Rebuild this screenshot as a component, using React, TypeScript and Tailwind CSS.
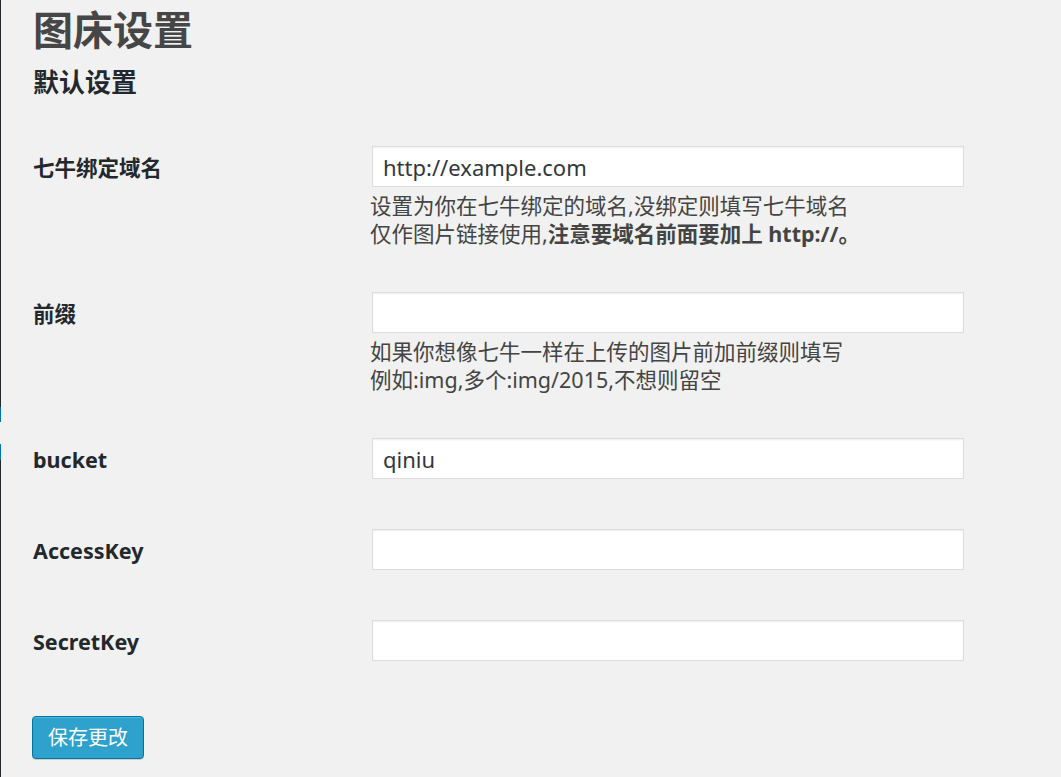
import { type ReactNode } from 'react';


type Field = {
  label: string;
  value: string;
  desc?: ReactNode;
};


const fields: Field[] = [
  {
    label: '七牛绑定域名',
    value: 'http://example.com',
    desc: (
      <>
        设置为你在七牛绑定的域名,没绑定则填写七牛域名
        <br />
        仅作图片链接使用,<strong className="font-bold">注意要域名前面要加上 http://。</strong>
      </>
    )
  },
  {
    label: '前缀',
    value: '',
    desc: (
      <>
        如果你想像七牛一样在上传的图片前加前缀则填写
        <br />
        例如:img,多个:img/2015,不想则留空
      </>
    )
  },
  { label: 'bucket', value: 'qiniu' },
  { label: 'AccessKey', value: '' },
  { label: 'SecretKey', value: '' }
];


const font = '[font-family:"Noto_Sans","Noto_Sans_CJK_SC",sans-serif]';


function Row({ field }: { field: Field }) {
  return (
    <div className={field.desc ? 'flex py-[22px]' : 'flex py-[22px] min-h-[91px]'}>

      {/* LABEL */}
      <div className="w-[339px] shrink-0 -mt-[22px] pt-[30px]">
        <label className="block text-[21.5px] leading-[28px] font-bold text-[#23282d]">
          {field.label}
        </label>
      </div>

      {/* INPUT + DESCRIPTION */}
      <div className="w-[592px]">
        <input
          type="text"
          defaultValue={field.value}
          className="block w-full h-[41px] px-[10px] bg-white border border-[#dddddd] shadow-[inset_0_1px_2px_rgba(0,0,0,0.07)] text-[22px] text-[#32373c] outline-none"
        />

        {field.desc && (
          <p className="mt-[5px] -ml-[2px] text-[21.5px] leading-[28px] text-[#444444]">
            {field.desc}
          </p>
        )}
      </div>

    </div>
  );
}


export default function App() {
  return (
    <main className={`min-h-[777px] flex bg-[#f1f1f1] ${font}`}>

      {/* admin menu edge */}
      <div className="w-px flex flex-col shrink-0">
        <div className="h-[407px] bg-[#23282d]" />
        <div className="h-[15px] bg-[#0073aa]" />
        <div className="h-[22px]" />
        <div className="h-[16px] bg-[#0073aa]" />
        <div className="flex-1 bg-[#23282d]" />
      </div>

      <div className="pl-[32px]">

        <h1 className="mt-[4px] text-[40px] leading-[52px] font-bold text-[#464646]">
          图床设置
        </h1>

        <h2 className="mt-[9px] text-[26px] leading-[34px] font-bold text-[#23282d]">
          默认设置
        </h2>

        <form className="mt-[25px]">
          {fields.map((f) => (
            <Row key={f.label} field={f} />
          ))}

          <button
            type="button"
            className="mt-[27px] -ml-px h-[43px] px-[15px] rounded-[4px] bg-[#2ea2cc] border border-[#0074a2] shadow-[inset_0_1px_0_rgba(120,200,230,0.5),0_1px_0_rgba(0,0,0,0.15)] text-white text-[20px] leading-[28px]"
          >
            保存更改
          </button>
        </form>

      </div>

    </main>
  );
}
